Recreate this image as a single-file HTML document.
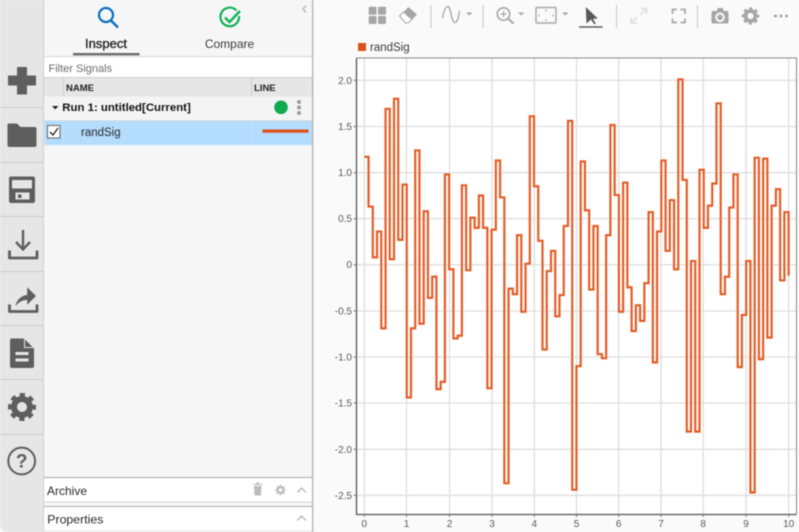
<!DOCTYPE html>
<html><head><meta charset="utf-8">
<style>
html,body{margin:0;padding:0;width:799px;height:532px;overflow:hidden;background:#fafafa}
svg{display:block;position:absolute;left:0;top:0}
text{font-family:"Liberation Sans",sans-serif}
</style></head>
<body>
<svg width="799" height="532" viewBox="0 0 799 532" xmlns="http://www.w3.org/2000/svg" style="filter:blur(.4px)">
<defs>
<g id="gear"><circle r="8" fill="none" stroke="currentColor" stroke-width="6"/><circle r="12" fill="none" stroke="currentColor" stroke-width="4" stroke-dasharray="5.2 4.22" stroke-dashoffset="2.6"/></g>
<path id="sig" fill="none" vector-effect="non-scaling-stroke" d="M0 1.17h.1V.63h.1V.08h.1V.36h.1V-.69h.1V1.69h.1V.06h.1V1.80h.1V.27h.1V.87h.1V-1.44h.1V-.69h.1V1.24h.1V-.64h.1V.58h.1V-.36h.1V-.13h.1V-1.35h.1V-1.27h.1V.98h.1V-.05h.1V-.80h.1V-.77h.1V.86h.1V-.06h.1V.51h.1V.40h.1V.75h.1V.40h.1V-1.34h.1V.38h.1V1.13h.1V.73h.1V-2.37h.1V-.26h.1V-.32h.1V.32h.1V-.51h.1V.01h.1V1.61h.1V.85h.1V.26h.1V-.92h.1V-.07h.1V.15h.1V-.56h.1V-.33h.1V.42h.1V1.56h.1V-2.44h.1V-1.10h.1V1.12h.1V.59h.1V-.27h.1V.42h.1V-.97h.1V-1.015h.1V.32h.1V1.515h.1V.756h.1V-.51h.1V.89h.1V-.245h.1V-.72h.1V-.44h.1V-.61h.1V-.20h.1V.57h.1V-1.06h.1V.36h.1V1.13h.1V.15h.1V.70h.1V-.05h.1V2.01h.1V.92h.1V-1.81h.1V.04h.1V-1.81h.1V1.03h.1V.40h.1V.64h.1V.88h.1V1.75h.1V-.32h.1V-.13h.1V.62h.1V.98h.1V-1.11h.1V-.545h.1V.04h.1V-2.47h.1V1.16h.1V-1.025h.1V1.15h.1V-.79h.1V.64h.1V.82h.1V-.17h.1V.57h.1V-.12"/>
</defs>
<rect width="799" height="532" fill="#fafafa"/>
<!-- left rail -->
<path d="M0 0H43.5V532H6Q0 530 0 524Z" fill="#e6e6e6"/>
<rect x="43" y="0" width="1" height="532" fill="#cfcfcf"/>
<g fill="#cdcdcd"><rect x="0" y="107" width="43" height="1"/><rect x="0" y="162" width="43" height="1"/><rect x="0" y="216" width="43" height="1"/><rect x="0" y="271" width="43" height="1"/><rect x="0" y="325" width="43" height="1"/><rect x="0" y="379" width="43" height="1"/><rect x="0" y="434" width="43" height="1"/></g>
<!-- rail icons -->
<path d="M17.500 67.500H26.500V76H35.500V85H26.500V94H17.500V85H8.500V76H17.500Z" fill="#5e5e5e" stroke="#5e5e5e" stroke-linejoin="round"/>
<path d="M9 123.500H17L20.500 127H34.500Q36.500 127 36.500 129V145Q36.500 147 34.500 147H9.500Q7.500 147 7.500 145V125Q7.500 123.500 9 123.500Z" fill="#5e5e5e"/>
<path fill-rule="evenodd" d="M11 176.500H33Q35 176.500 35 178.500V201Q35 203 33 203H11Q9 203 9 201V178.500Q9 176.500 11 176.500ZM12.500 180Q12 180 12 181V187.500Q12 188.500 13 188.500H31Q32 188.500 32 187.500V181Q32 180 31 180ZM15.500 192.500V199.500H29.500V192.500ZM18 194.500H21.500V198H18Z" fill="#5e5e5e"/>
<g fill="none" stroke="#5e5e5e" stroke-width="2.400"><path d="M23 230V249.500"/><path d="M16 242L23 249.500L30 242"/><path d="M9.500 250.500V258H37V250.500" stroke-width="2.800" stroke-linejoin="round"/></g>
<path d="M9.500 304.500V311.500H37V304.500" fill="none" stroke="#5e5e5e" stroke-width="2.800" stroke-linejoin="round"/>
<path d="M16 305Q18 297 27.500 295V288L35.500 296L27.500 304V299.500Q21 299.500 16 305Z" fill="#5e5e5e" stroke="#5e5e5e" stroke-width=".6" stroke-linejoin="round"/>
<path fill-rule="evenodd" d="M12 338.500H24L34 348.500V366Q34 368 32 368H12Q10 368 10 366V340.500Q10 338.500 12 338.500ZM15.500 352V355H28.500V352ZM15.500 358.500V361.500H28.500V358.500Z" fill="#5e5e5e"/>
<path d="M24.500 338.500V347.500H33.500" fill="none" stroke="#e6e6e6" stroke-width="1"/>
<use href="#gear" transform="translate(22,407)" color="#5e5e5e"/>
<circle cx="21.700" cy="461" r="13.400" fill="none" stroke="#5e5e5e" stroke-width="2"/>
<text x="21.700" y="467.500" font-size="19" font-weight="bold" fill="#5e5e5e" text-anchor="middle">?</text>
<!-- panel -->
<rect x="44" y="0" width="268" height="532" fill="#f6f6f6"/>
<rect x="312" y="0" width="1.300" height="532" fill="#b0b0b0"/>
<circle cx="106" cy="15" r="7" fill="none" stroke="#0a6ebd" stroke-width="2.200"/>
<path d="M111 20.500L118 27.500" stroke="#0a6ebd" stroke-width="2.400" fill="none"/>
<path d="M236.500 10.500A9.300 9.300 0 1 0 239 16" fill="none" stroke="#12b155" stroke-width="2.200"/>
<path d="M225 17.500L229.500 22L240 11" fill="none" stroke="#12b155" stroke-width="2.400"/>
<path d="M306 5.500L303 9L306 12.500" fill="none" stroke="#b0b0b0" stroke-width="1.300"/>
<text x="106" y="48" font-size="13" fill="#222" stroke="#222" stroke-width=".35" text-anchor="middle">Inspect</text>
<text x="229.500" y="48" font-size="12" fill="#3a3a3a" text-anchor="middle">Compare</text>
<rect x="73" y="53" width="66.500" height="2.400" fill="#6b6b6b"/>
<!-- filter -->
<rect x="44" y="56" width="268" height="21" fill="#fff"/>
<rect x="44" y="56" width="268" height="1" fill="#d8d8d8"/>
<text x="48.500" y="72" font-size="11" fill="#6e6e6e">Filter Signals</text>
<!-- header -->
<rect x="44" y="77" width="268" height="19.500" fill="#e6e6e6"/>
<rect x="44" y="77" width="268" height="1" fill="#cfcfcf"/>
<rect x="63" y="78" width="1" height="18" fill="#d0d0d0"/>
<rect x="251" y="78" width="1" height="18" fill="#cacaca"/>
<text x="66" y="91" font-size="9.500" font-weight="bold" fill="#222">NAME</text>
<text x="254" y="91" font-size="9.500" font-weight="bold" fill="#222">LINE</text>
<!-- run row -->
<rect x="44" y="96.500" width="268" height="24" fill="#f4f4f4"/>
<rect x="44" y="120" width="268" height="1" fill="#dedede"/>
<path d="M52 106H58.500L55.200 109.500Z" fill="#222"/>
<text x="62.300" y="111" font-size="11.400" font-weight="bold" fill="#111">Run 1: untitled[Current]</text>
<circle cx="281" cy="107.300" r="6.800" fill="#0cab50"/>
<g fill="#9c9c9c"><circle cx="299" cy="102" r="2"/><circle cx="299" cy="107.500" r="2"/><circle cx="299" cy="113" r="2"/></g>
<!-- selected row -->
<rect x="44.500" y="121" width="267.500" height="24" fill="#b3dcfd"/>
<rect x="63" y="121" width="1" height="24" fill="#c2e2fb"/>
<rect x="251" y="121" width="1" height="24" fill="#bfe1fc"/>
<rect x="47.500" y="125.500" width="12.500" height="12.500" fill="#fff" stroke="#666"/>
<path d="M50 132L53 135L58 128" fill="none" stroke="#222" stroke-width="1.300"/>
<text x="81" y="136" font-size="11.500" fill="#2a2a2a">randSig</text>
<rect x="262.500" y="129.500" width="46" height="3.200" fill="#dc5218"/>
<!-- archive -->
<rect x="44" y="477" width="268" height="25" fill="#fff"/>
<rect x="44" y="477" width="268" height="1" fill="#a8a8a8"/>
<rect x="44" y="501.500" width="268" height="1" fill="#d8d8d8"/>
<text x="47" y="495" font-size="12" fill="#2a2a2a">Archive</text>
<path d="M253 485H262.500V484H259.500L259 482.500H256.500L256 484H253ZM254 486H261.500L261 495.500H254.500Z" fill="#bcbcbc"/>
<use href="#gear" transform="translate(280.500,490) scale(.36)" color="#bcbcbc"/>
<path d="M297.500 492.500L301.500 488L306 492.500" fill="none" stroke="#adadad" stroke-width="1.200"/>
<!-- properties -->
<rect x="44" y="506" width="268" height="24.500" fill="#fff"/>
<rect x="44" y="506" width="268" height="1" fill="#a8a8a8"/>
<rect x="44" y="530.500" width="268" height="1.500" fill="#e8e8e8"/>
<text x="47.300" y="523.500" font-size="12.300" fill="#2a2a2a">Properties</text>
<path d="M297.500 520.500L301.500 516L306 520.500" fill="none" stroke="#adadad" stroke-width="1.200"/>
<!-- toolbar -->
<g fill="#a6a6a6">
<rect x="368.700" y="6.700" width="7.800" height="8" rx="1"/><rect x="378" y="6.700" width="8" height="8" rx="1"/><rect x="368.700" y="16" width="7.800" height="8" rx="1"/><rect x="378" y="16" width="8" height="8" rx="1"/>
<path d="M408.500 7L417 14.500L412 19.500L403.500 12Z"/>
</g>
<path d="M403.500 12L399.500 16L405.500 23L408 23L412 19.500Z" fill="#fff" stroke="#a6a6a6" stroke-width="1"/>
<g fill="#c6c6c6"><rect x="430.500" y="5" width="1" height="23"/><rect x="482.500" y="5" width="1" height="23"/><rect x="616" y="5" width="1" height="23"/><rect x="697" y="5" width="1" height="23"/></g>
<path d="M442.500 18C444 9 446 6.500 448 6.500C451 6.500 451 22.500 455 22.500C458 22.500 459 14 459.500 11" fill="none" stroke="#a0a0a0" stroke-width="1.200"/>
<path d="M466 12.500H472.500L469.200 15.500Z" fill="#a6a6a6"/>
<circle cx="503.500" cy="14" r="6.200" fill="none" stroke="#a6a6a6" stroke-width="1.600"/>
<path d="M500.500 14H506.500M503.500 11V17" stroke="#a6a6a6" stroke-width="1.200" fill="none"/>
<path d="M508 18.500L513.500 23.500" stroke="#a6a6a6" stroke-width="2" fill="none"/>
<path d="M518 12.500H524.500L521.200 15.500Z" fill="#a6a6a6"/>
<rect x="536" y="7.500" width="20" height="15.500" rx="1" fill="none" stroke="#a6a6a6" stroke-width="1.400"/>
<path d="M544.500 11L546 9.500L547.500 11ZM544.500 19.500L546 21L547.500 19.500ZM539.500 14L538 15.500L539.500 17ZM552.500 14L554 15.500L552.500 17Z" fill="#a6a6a6"/>
<path d="M562 12.500H568.500L565.200 15.500Z" fill="#a6a6a6"/>
<path d="M585.800 7L597.800 18.500L593 18.800L596 24H594L591 19.500L586.500 23.500Z" fill="#595959"/>
<rect x="579" y="26.300" width="23.500" height="1.400" fill="#555"/>
<g fill="none" stroke="#e0e0e0" stroke-width="1.800"><path d="M640 15L646 9M641 8.500H646.500V14"/><path d="M637 17L631.500 23M631.200 17.500V23H637"/></g>
<path d="M672.500 14V9.500H677M680.500 9.500H685V14M672.500 18.500V22.500H677M680.500 22.500H685V18.500" fill="none" stroke="#a6a6a6" stroke-width="1.700"/>
<path fill-rule="evenodd" d="M713 11H716.500L718 8H722.500L724 11H727Q728.500 11 728.500 12.500V22Q728.500 23.500 727 23.500H713Q711.500 23.500 711.500 22V12.500Q711.500 11 713 11ZM720 12.500A4.800 4.800 0 1 0 720 22.100A4.800 4.800 0 1 0 720 12.500Z" fill="#a6a6a6"/>
<circle cx="720" cy="17.300" r="2.800" fill="#a6a6a6"/>
<use href="#gear" transform="translate(750.500,16) scale(.62)" color="#a6a6a6"/>
<g fill="#a6a6a6"><circle cx="775.500" cy="16" r="1.500"/><circle cx="781" cy="16" r="1.500"/><circle cx="786.500" cy="16" r="1.500"/></g>
<!-- legend -->
<rect x="358" y="43" width="8" height="8" fill="#dc5218"/>
<text x="370" y="51" font-size="11.500" fill="#3a3a3a">randSig</text>
<!-- plot -->
<rect x="356.500" y="58" width="440" height="456.500" fill="#fff"/>
<g stroke="#dedede" stroke-width="1.300" fill="none">
<path d="M356.500 80.300H796M356.500 126.500H796M356.500 172.700H796M356.500 218.700H796M356.500 264.700H796M356.500 311H796M356.500 357H796M356.500 403H796M356.500 449.300H796M356.500 495.300H796"/>
<path d="M364.300 58V514M406.500 58V514M449.500 58V514M492 58V514M534.300 58V514M576.500 58V514M618.700 58V514M661 58V514M703.200 58V514M746 58V514M788.700 58V514"/>
</g>
<path d="M356.500 58H796.500V514.500" fill="none" stroke="#888" stroke-width="1"/>
<path d="M356.500 58V514.500H796.500" fill="none" stroke="#555" stroke-width="1.300"/>
<g stroke="#777" stroke-width="1" fill="none">
<path d="M353.500 80.300H356.500M353.500 126.500H356.500M353.500 172.700H356.500M353.500 218.700H356.500M353.500 264.700H356.500M353.500 311H356.500M353.500 357H356.500M353.500 403H356.500M353.500 449.300H356.500M353.500 495.300H356.500"/>
<path d="M364.300 514.500V517M406.500 514.500V517M449.500 514.500V517M492 514.500V517M534.300 514.500V517M576.500 514.500V517M618.700 514.500V517M661 514.500V517M703.200 514.500V517M746 514.500V517M788.700 514.500V517"/>
</g>
<g font-size="10" fill="#5a5a5a" text-anchor="end">
<text x="352" y="84">2.0</text><text x="352" y="130">1.5</text><text x="352" y="176">1.0</text><text x="352" y="222">0.5</text><text x="352" y="268">0</text><text x="352" y="314.500">-0.5</text><text x="352" y="360.500">-1.0</text><text x="352" y="406.500">-1.5</text><text x="352" y="453">-2.0</text><text x="352" y="499">-2.5</text>
</g>
<g font-size="10" fill="#5a5a5a" text-anchor="middle">
<text x="364.300" y="527">0</text><text x="406.500" y="527">1</text><text x="449.500" y="527">2</text><text x="492" y="527">3</text><text x="534.300" y="527">4</text><text x="576.500" y="527">5</text><text x="618.700" y="527">6</text><text x="661" y="527">7</text><text x="703.200" y="527">8</text><text x="746" y="527">9</text><text x="788.700" y="527">10</text>
</g>
<g transform="translate(364.300,264.700) scale(42.430,-92.200)">
<use href="#sig" stroke="#f6d0c0" stroke-width="2.800"/>
<use href="#sig" stroke="#e2541b" stroke-width="1.800"/>
</g>
</svg>
</body></html>
